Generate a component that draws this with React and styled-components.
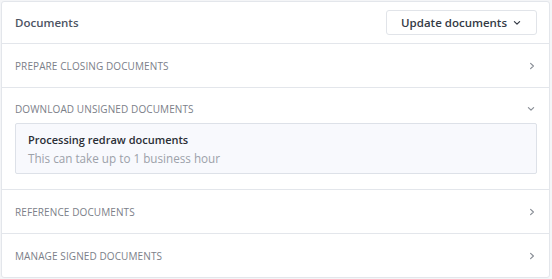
import React from "react";
import styled, { createGlobalStyle } from "styled-components";

const Global = createGlobalStyle`
  html, body { margin: 0; padding: 0; background: #f4f5f7; }
  body { font-family: "Open Sans", "Noto Sans", sans-serif; }
  * { box-sizing: border-box; }
`;

const Page = styled.div`
  padding: 1px 2px 3px 1px;
`;

const Card = styled.section`
  background: #fff;
  border: 1px solid #e3e6eb;
  border-radius: 3px;
  width: 549px;
`;

const Header = styled.header`
  display: flex;
  align-items: center;
  justify-content: space-between;
  height: 42px;
  padding: 0 12px 0 13px;
  border-bottom: 1px solid #e3e6eb;
`;

const Title = styled.h2`
  margin: 0;
  font-size: 11.5px;
  font-weight: 600;
  color: #4d5463;
`;

const DropButton = styled.button`
  display: flex;
  align-items: center;
  gap: 6px;
  height: 25px;
  padding: 0 15px 0 14px;
  background: #fff;
  border: 1px solid #e1e4e9;
  border-radius: 3px;
  font-family: inherit;
  font-size: 11.5px;
  font-weight: 600;
  color: #343a45;
`;

const Section = styled.div`
  border-bottom: ${(p) => (p.$last ? "none" : "1px solid #e3e6eb")};
`;

const RowHead = styled.div`
  display: flex;
  align-items: center;
  justify-content: space-between;
  height: ${(p) => (p.$open ? "35px" : "43px")};
  padding: ${(p) => (p.$open ? "6px 14px 0 13px" : "0 14px 0 13px")};
`;

const Label = styled.span`
  font-size: 10px;
  font-weight: 400;
  letter-spacing: 0.1px;
  text-transform: uppercase;
  color: #7b8089;
`;

const Body = styled.div`
  padding: 0 12px 15px 13px;
`;

const Notice = styled.div`
  background: #f8f9fd;
  border: 1px solid #dde1e8;
  border-radius: 2px;
  padding: 7px 12px 6px;
  display: flex;
  flex-direction: column;
  gap: 2px;
`;

const NoticeTitle = styled.div`
  font-size: 11px;
  font-weight: 600;
  color: #2b2f36;
  line-height: 17px;
`;

const NoticeText = styled.div`
  font-size: 11.7px;
  color: #9ca1a9;
  line-height: 17px;
`;

const Chevron = ({ dir = "right", color = "#8a8f97" }) => (
  <svg width="8" height="8" viewBox="0 0 8 8" fill="none">
    {dir === "right" ? (
      <path d="M3.6 1.4 L6.4 4 L3.6 6.6" stroke={color} strokeWidth="1.2" strokeLinecap="round" strokeLinejoin="round" />
    ) : (
      <path d="M1.4 2.6 L4 5.2 L6.6 2.6" stroke={color} strokeWidth="1.2" strokeLinecap="round" strokeLinejoin="round" />
    )}
  </svg>
);

const sections = [
  { label: "Prepare closing documents" },
  { label: "Download unsigned documents", open: true },
  { label: "Reference documents" },
  { label: "Manage signed documents" },
];

export default function App() {
  return (
    <>
      <Global />
      <Page>
        <Card>
          <Header>
            <Title>Documents</Title>
            <DropButton>
              Update documents
              <Chevron dir="down" color="#343a45" />
            </DropButton>
          </Header>
          {sections.map((s, i) => (
            <Section key={s.label} $last={i === sections.length - 1}>
              <RowHead $open={s.open}>
                <Label>{s.label}</Label>
                <Chevron dir={s.open ? "down" : "right"} />
              </RowHead>
              {s.open && (
                <Body>
                  <Notice>
                    <NoticeTitle>Processing redraw documents</NoticeTitle>
                    <NoticeText>This can take up to 1 business hour</NoticeText>
                  </Notice>
                </Body>
              )}
            </Section>
          ))}
        </Card>
      </Page>
    </>
  );
}
